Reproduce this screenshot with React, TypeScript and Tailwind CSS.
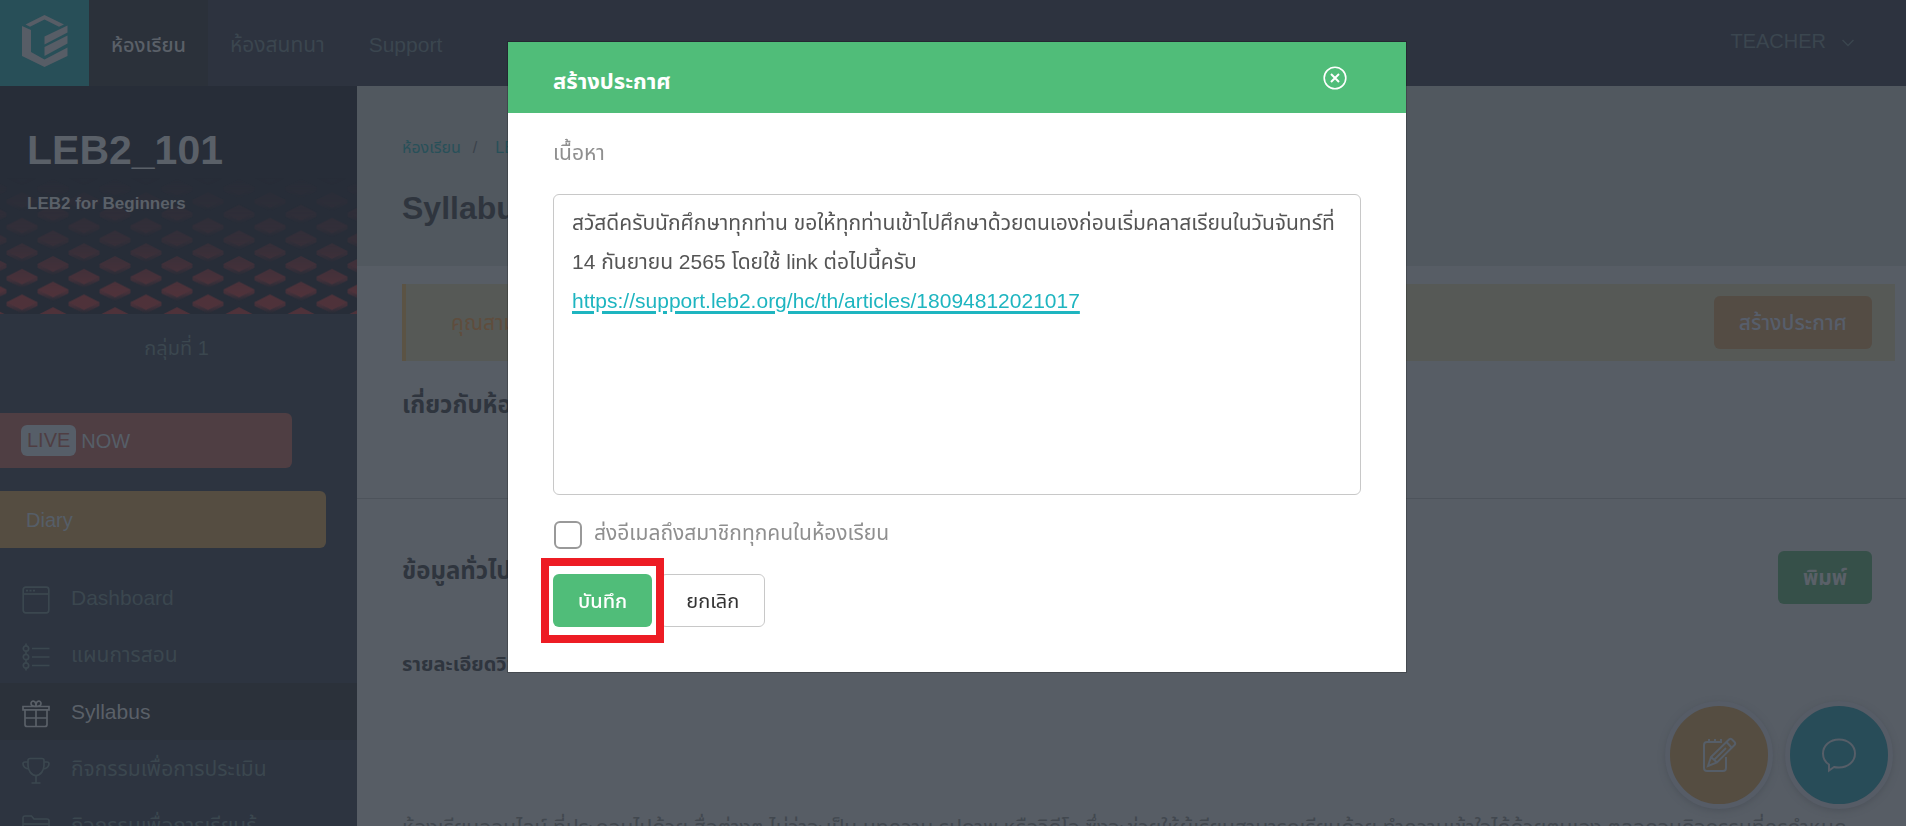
import type { ReactNode } from "react"

const font = "font-['Liberation_Sans','Noto_Sans_Thai','Noto_Sans',sans-serif]"

function Icon({ children, className }: { children: ReactNode; className: string }) {
  return (
    <svg
      className={className}
      viewBox="0 0 28 28"
      fill="none"
      stroke="currentColor"
      strokeWidth="1.7"
      aria-hidden="true"
    >
      {children}
    </svg>
  )
}

const menu = [
  {
    label: "Dashboard",
    icon: (
      <>
        <rect x="1.2" y="1.2" width="25.6" height="25.6" rx="2.5" />
        <path d="M1 8h26" />
        <path d="M4 4.7h2M7.5 4.7h2M11 4.7h2" />
      </>
    ),
  },
  {
    label: "แผนการสอน",
    icon: (
      <>
        <circle cx="4" cy="5.5" r="2.7" />
        <circle cx="4" cy="14" r="2.7" />
        <circle cx="4" cy="22.5" r="2.7" />
        <path d="M4 .5v2.5M4 8.2v3M4 16.7v3M4 25v2.5M10 5.5h17.5M10 14h17.5M10 22.5h17.5" />
      </>
    ),
  },
  {
    label: "Syllabus",
    active: true,
    icon: (
      <>
        <path d="M1 6.5h26v3.3H1z" />
        <path d="M3 10v14.5c0 1.3.7 2 2 2h18c1.3 0 2-.7 2-2V10M14 10v16.5M3 18h22" />
        <path d="M14 6.5c-3 0-5-.8-5-3 0-1.5 1-2.3 2.2-2.3C13 1.2 14 3 14 6.500zM14 6.500c3 0 5-.8 5-3 0-1.500-1-2.300-2.200-2.300C15 1.200 14 3 14 6.500z" />
      </>
    ),
  },
  {
    label: "กิจกรรมเพื่อการประเมิน",
    icon: (
      <>
        <path d="M8 1.5h12c1.3 0 2 .7 2 2v5c0 5-3.5 10-8 10s-8-5-8-10v-5c0-1.3.7-2 2-2z" />
        <path d="M6 5H3C1.7 5 1 5.6 1 6.8 1 9.500 3.500 12 7 12M22 5h3c1.300 0 2 .6 2 1.800 0 2.700-2.500 5.200-6 5.200M14 18.500V26M9.500 26h9" />
      </>
    ),
  },
  {
    label: "กิจกรรมเพื่อการเรียนรู้",
    icon: (
      <>
        <path d="M1 24V4c0-1.3.7-2 2-2h6.5L12 5h13c1.3 0 2 .7 2 2v17c0 1.3-.7 2-2 2H3c-1.300 0-2-.7-2-2z" />
        <path d="M1 10h26" />
      </>
    ),
  },
]

function Header() {
  return (
    <header className="flex h-[86px] items-stretch bg-[#2d333f] text-[21px] text-[#3b464f]">
      <a href="#" aria-label="LEB2" className="w-[89px] bg-[#284f58] pt-[14px]">
        <svg className="mx-auto h-[53px] w-[46px]" viewBox="0 0 46 53" fill="#575d66">
          <path d="M3.5 10.5 22.5 1 42 10.5 37 12.8 22.5 5.5 8 12.8z" />
          <path d="M0 12 9 16V38L22.5 45.5 45.500 33.500V42L22.500 53 0 42z" />
          <path d="M22.500 22.500 45.500 11.500V18.500L22.500 30.500z" />
          <path d="M22.500 33 45.500 21.500V29.500L22.500 42z" />
        </svg>
      </a>
      <nav className="flex grow items-center">
        <a href="#" className="flex h-full items-center bg-[#2b313a] px-[22px] pt-1 text-xl font-medium text-[#5a6068]">
          ห้องเรียน
        </a>
        <a href="#" className="px-[22px] pt-1">
          ห้องสนทนา
        </a>
        <a href="#" className="px-[22px] pt-1">
          Support
        </a>
      </nav>
      <button type="button" className="flex items-center gap-4 pr-[52px] pb-1 text-xl">
        TEACHER
        <svg className="mt-1 h-2 w-3" viewBox="0 0 12 8" fill="none" stroke="currentColor" strokeWidth="1.5" aria-hidden="true">
          <path d="M.5 1 6 6.5 11.5 1" />
        </svg>
      </button>
    </header>
  )
}

function Diamonds() {
  return (
    <svg className="absolute inset-0 h-full w-full" aria-hidden="true">
      <defs>
        <linearGradient id="side" x1="0" y1="0" x2="0" y2="1">
          <stop offset="0.3" stopColor="#53333b" stopOpacity="0.8" />
          <stop offset="1" stopColor="#53333b" stopOpacity="0" />
        </linearGradient>
        <pattern id="tiles" width="62" height="25.6" patternUnits="userSpaceOnUse" x="-9" y="203.5">
          <path d="M15.5 12.5v4L31 24l15.5-7.5v-4z" fill="url(#side)" />
          <path d="M15.5 12.8 31 5l15.5 7.8L31 20.5z" fill="#53333b" />
          <path d="M-15.5 0v4L0 11.5 15.5 4V0zM46.5 0v4L62 11.5 77.5 4V0z" fill="url(#side)" />
          <path d="M-15.5 0 0-7.8 15.5 0 0 7.8zM46.5 0 62-7.8 77.5 0 62 7.8zM-15.5 25.6 0 17.8l15.5 7.8zM46.5 25.6 62 17.8l15.500 7.800z" fill="#53333b" />
        </pattern>
        <linearGradient id="fade" x1="0" y1="0" x2="0" y2="1">
          <stop offset="0.4" stopColor="#fff" stopOpacity="0" />
          <stop offset="0.7" stopColor="#fff" stopOpacity="0.35" />
          <stop offset="0.9" stopColor="#fff" stopOpacity="0.9" />
        </linearGradient>
        <mask id="fadeMask">
          <rect width="100%" height="100%" fill="url(#fade)" />
        </mask>
      </defs>
      <rect width="100%" height="100%" fill="url(#tiles)" mask="url(#fadeMask)" />
    </svg>
  )
}

function Sidebar() {
  return (
    <aside className="w-[357px] shrink-0 bg-[#2d3440] text-[21px] text-[#3b474f]">
      <div className="relative h-[228px] bg-[#272d38] text-[#5a6068]">
        <Diamonds />
        <div className="relative px-[27px] pt-10">
          <h2 className="text-[41px] leading-[48px] font-bold">LEB2_101</h2>
          <p className="mt-[18px] text-[17px] leading-6 font-bold">LEB2 for Beginners</p>
        </div>
      </div>
      <p className="pt-5 pr-1 pb-[51px] text-center text-xl leading-7">กลุ่มที่ 1</p>
      <a href="#" className="flex h-[55px] w-[292px] items-center gap-[5px] rounded-r-md bg-[#4f3e43] pl-[21px] text-xl text-[#565e68]">
        <span className="rounded-md bg-[#565e68] px-[6px] leading-[31px] text-[#4f3e43]">LIVE</span>
        NOW
      </a>
      <a href="#" className="mt-[23px] flex h-[57px] w-[326px] items-center rounded-r-md bg-[#554d41] pl-[26px] text-xl text-[#565e68]">
        Diary
      </a>
      <ul className="mt-[21px]">
        {menu.map((item) => (
          <li key={item.label}>
            <a
              href="#"
              className={
                item.active
                  ? "flex h-[57px] items-center gap-[21px] bg-[#2b313a] pl-[22px] text-[#5a6068]"
                  : "flex h-[57px] items-center gap-[21px] pl-[22px]"
              }
            >
              <Icon className="mt-1 h-7 w-7">{item.icon}</Icon>
              {item.label}
            </a>
          </li>
        ))}
      </ul>
    </aside>
  )
}

function Content() {
  return (
    <main className="min-w-0 grow bg-[#575d65] text-[#2f353e]">
      <div className="h-[180px] bg-[#51585f] px-[45px] pt-12">
        <nav className="flex gap-3 text-base leading-7 text-[#285059]">
          <a href="#">ห้องเรียน</a>
          <span className="text-[#3b424b]">/</span>
          <a href="#" className="pl-[6px]">
            LEB2_101
          </a>
        </nav>
        <h1 className="mt-6 text-[32px] leading-[44px] font-bold">Syllabus</h1>
      </div>

      <div className="mt-[18px] mr-[11px] ml-[45px] flex h-[77px] items-center justify-between border-l-4 border-[#5b5344] bg-[#565956] pr-[23px] pl-[45px] text-[21px] text-[#5f4d3d]">
        คุณสามารถสร้างประกาศถึงนักศึกษาได้
        <button type="button" className="h-[53px] rounded-md bg-[#544c44] px-[25px] font-medium text-[#575e6b]">
          สร้างประกาศ
        </button>
      </div>

      <section className="h-[138px] border-b border-[#4d535b] px-[45px] pt-6">
        <h3 className="text-2xl leading-10 font-bold">เกี่ยวกับห้องเรียน</h3>
      </section>

      <section className="pr-[34px] pl-[45px]">
        <div className="flex items-start justify-between pt-[52px]">
          <h3 className="text-2xl leading-10 font-bold">ข้อมูลทั่วไป</h3>
          <button type="button" className="h-[53px] rounded-md bg-[#365049] px-[25px] text-[21px] font-bold text-[#5a6068]">
            พิมพ์
          </button>
        </div>
        <h4 className="mt-11 text-xl leading-8 font-bold">รายละเอียดวิชา/Link</h4>
        <p className="mt-[132px] text-[21px] leading-8 text-[#42484f]">
          ห้องเรียนออนไลน์ ที่ประกอบไปด้วย สื่อต่างๆ ไม่ว่าจะเป็น บทความ รูปภาพ หรือวิดีโอ ซึ่งจะช่วยให้ผู้เรียนสามารถเรียนด้วย
          ทำความเข้าใจได้ด้วยตนเอง ตลอดจนกิจกรรมที่ครูกำหนด
        </p>
      </section>
    </main>
  )
}

function FloatingButtons() {
  return (
    <div className="fixed right-[13px] bottom-[17px] flex gap-3 text-[#565e68]">
      <button
        type="button"
        aria-label="Diary"
        className="flex h-[108px] w-[108px] items-center justify-center rounded-full border-[5px] border-[#565c66] bg-[#554d41] shadow-[0_2px_6px_#4d535b]"
      >
        <svg className="h-9 w-9" viewBox="0 0 36 36" fill="none" stroke="currentColor" strokeWidth="2" aria-hidden="true">
          <path d="M21 5H6C4 5 3 6 3 8v23c0 2 1 3 3 3h16c2 0 3-1 3-3V20" />
          <path d="M8 2v3M14 2v3M20 2v3" />
          <path d="M7 29l3-9L28 2.5c1-1 2-1 3 0L33.5 5c1 1 1 2 0 3L16 25.5zM10 20l6 5.5M25.5 5l5.5 6M13 23 25 11" />
        </svg>
      </button>
      <button
        type="button"
        aria-label="Chat"
        className="flex h-[108px] w-[108px] items-center justify-center rounded-full border-[5px] border-[#565c66] bg-[#284c58] shadow-[0_2px_6px_#4d535b]"
      >
        <svg className="h-9 w-9" viewBox="0 0 36 36" fill="none" stroke="currentColor" strokeWidth="2" aria-hidden="true">
          <path d="M18 2.5c9 0 16 6 16 14s-7 14-16 14c-1.8 0-3.5 0-5-.5L8 33.5v-6c-4-2.5-6-6.5-6-11 0-8 7-14 16-14z" />
        </svg>
      </button>
    </div>
  )
}

function AnnouncementModal() {
  return (
    <div className="fixed inset-0 flex items-start justify-center pt-[42px] pr-4 pl-6">
      <div
        role="dialog"
        aria-labelledby="modal-title"
        className="w-full max-w-[898px] bg-white shadow-[0_0_0_1px_rgba(0,0,0,0.2)]"
      >
        <div className="flex h-[71px] items-center justify-between bg-[#50bd79] pr-[59px] pl-[45px] text-white">
          <h2 id="modal-title" className="pt-2 text-[22px] font-bold">
            สร้างประกาศ
          </h2>
          <button type="button" aria-label="Close">
            <svg className="h-6 w-6" viewBox="0 0 24 24" fill="none" stroke="currentColor" aria-hidden="true">
              <circle cx="12" cy="12" r="10.8" strokeWidth="1.6" />
              <path d="M8 8l8 8M16 8l-8 8" strokeWidth="2" />
            </svg>
          </button>
        </div>

        <form className="px-[45px] pb-[45px] text-[21px]">
          <span id="content-label" className="block pt-6 leading-8 text-[#8f8f8f]">
            เนื้อหา
          </span>
          <div
            role="textbox"
            aria-labelledby="content-label"
            contentEditable
            suppressContentEditableWarning
            className="mt-[25px] h-[301px] rounded-md border border-[#c8c8c8] px-[18px] pt-2 leading-[39px] text-[#555]"
          >
            <p>
              สวัสดีครับนักศึกษาทุกท่าน ขอให้ทุกท่านเข้าไปศึกษาด้วยตนเองก่อนเริ่มคลาสเรียนในวันจันทร์ที่ 14 กันยายน 2565
              โดยใช้ link ต่อไปนี้ครับ
            </p>
            <a
              href="https://support.leb2.org/hc/th/articles/18094812021017"
              className="text-[#1eb5c0] underline decoration-[3px] underline-offset-3"
            >
              https://support.leb2.org/hc/th/articles/18094812021017
            </a>
          </div>

          <label className="mt-[22px] flex h-8 items-center gap-3 text-[#8f8f8f]">
            <input type="checkbox" className="mt-1 ml-px h-7 w-7 appearance-none rounded-md border-2 border-[#999]" />
            ส่งอีเมลถึงสมาชิกทุกคนในห้องเรียน
          </label>

          <div className="mt-[25px] flex gap-2 text-xl">
            <div className="relative">
              <button type="submit" className="h-[53px] rounded-md bg-[#50bd79] px-[25px] font-medium text-white">
                บันทึก
              </button>
              <div className="pointer-events-none absolute -inset-x-3 -inset-y-4 border-8 border-[#ed1c24]" />
            </div>
            <button type="button" className="h-[53px] rounded-md border border-[#c8c8c8] px-[25px] text-[#333]">
              ยกเลิก
            </button>
          </div>
        </form>
      </div>
    </div>
  )
}

export default function App() {
  return (
    <div className={`h-screen overflow-hidden ${font}`}>
      <Header />
      <div className="flex">
        <Sidebar />
        <Content />
      </div>
      <FloatingButtons />
      <AnnouncementModal />
    </div>
  )
}
